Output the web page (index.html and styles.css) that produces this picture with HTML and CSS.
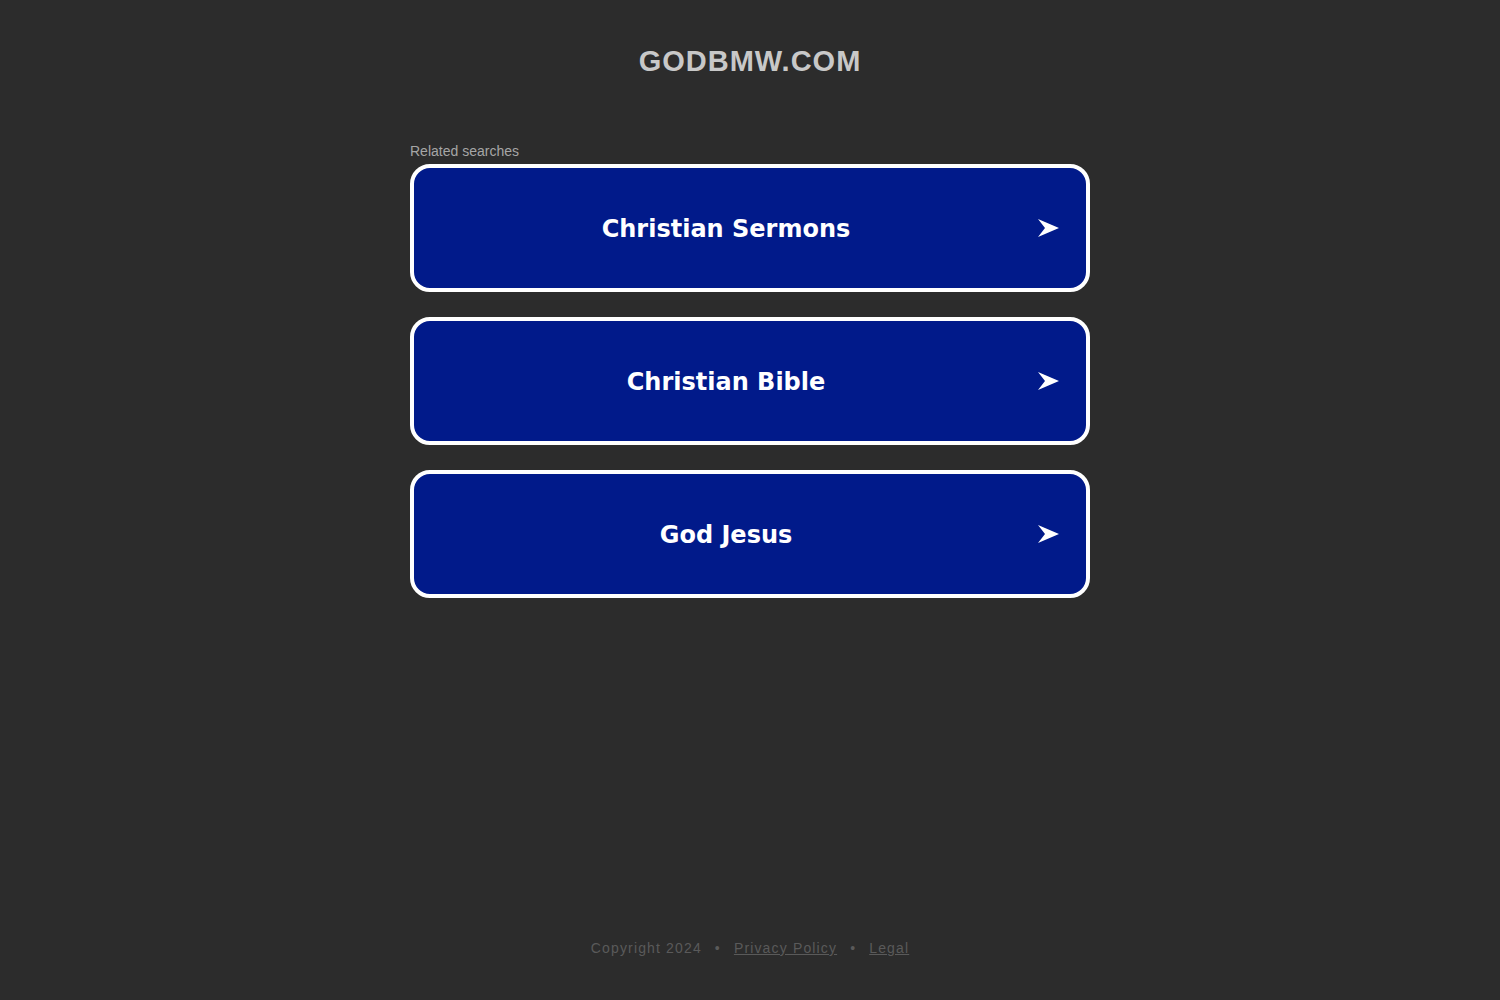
FILE: index.html
```html
<!DOCTYPE html>
<html>
<head>
<meta charset="utf-8">
<link rel="stylesheet" href="styles.css">
</head>
<body>
<div class="page">
  <header class="header"><h1 class="domain">GODBMW.COM</h1></header>
  <main class="main">
    <div class="label">Related searches</div>
    <div class="list">
      <a class="item" href="#"><span class="item-text">Christian Sermons</span><svg class="arrow" width="21" height="18" viewBox="0 0 21 18"><path d="M0 0 L21 9 L0 18 L7 9 Z" fill="#fff"/></svg></a>
      <a class="item" href="#"><span class="item-text">Christian Bible</span><svg class="arrow" width="21" height="18" viewBox="0 0 21 18"><path d="M0 0 L21 9 L0 18 L7 9 Z" fill="#fff"/></svg></a>
      <a class="item" href="#"><span class="item-text">God Jesus</span><svg class="arrow" width="21" height="18" viewBox="0 0 21 18"><path d="M0 0 L21 9 L0 18 L7 9 Z" fill="#fff"/></svg></a>
    </div>
  </main>
  <footer class="footer">
    <span>Copyright 2024</span><span class="dot">•</span><a href="#">Privacy Policy</a><span class="dot">•</span><a href="#">Legal</a>
  </footer>
</div>
</body>
</html>
```
FILE: styles.css
```css
html, body {
  margin: 0;
  padding: 0;
  background: #2c2c2c;
}
.page {
  height: 1000px;
  display: flex;
  flex-direction: column;
  align-items: center;
  font-family: "Liberation Sans", Arial, sans-serif;
}
.header {
  padding-top: 43px;
}
.domain {
  margin: 0;
  font-size: 29px;
  line-height: 36px;
  font-weight: bold;
  letter-spacing: 1px;
  color: #c8c8c8;
}
.main {
  width: 680px;
  margin-top: 64px;
}
.label {
  font-size: 14px;
  line-height: 16px;
  color: #a6a6a6;
  margin-bottom: 5px;
}
.list {
  display: flex;
  flex-direction: column;
  gap: 25px;
}
.item {
  height: 128px;
  box-sizing: border-box;
  border: 4px solid #fff;
  border-radius: 20px;
  background: #011a8a;
  display: flex;
  align-items: center;
  padding-right: 27px;
  text-decoration: none;
}
.item-text {
  flex: 1;
  text-align: center;
  color: #fff;
  font-family: "DejaVu Sans", Verdana, sans-serif;
  font-weight: bold;
  font-size: 24px;
  padding-top: 2px;
}
.arrow {
  display: block;
}
.footer {
  margin-top: auto;
  margin-bottom: 44px;
  font-size: 14px;
  letter-spacing: 1.15px;
  color: #5a5a5a;
  display: flex;
  gap: 13px;
}
.footer a {
  color: #5a5a5a;
  text-decoration: underline;
}
```
